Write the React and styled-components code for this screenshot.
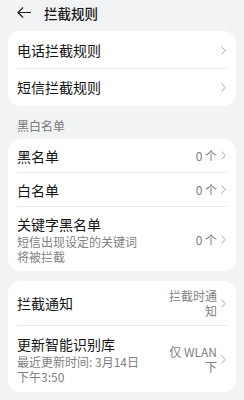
import React from 'react';
import styled, { createGlobalStyle } from 'styled-components';

const GlobalStyle = createGlobalStyle`
  html, body {
    margin: 0;
    padding: 0;
    background: #f1f3f5;
    font-family: "Noto Sans CJK SC", "Noto Sans", sans-serif;
    color: #191919;
  }
`;

const Page = styled.div`
  width: 244px;
  height: 400px;
  overflow: hidden;
  background: #f1f3f5;
`;

const Header = styled.div`
  display: flex;
  align-items: center;
  height: 25px;
  padding: 0 0 0 17px;
  gap: 13px;
  margin-bottom: 6px;
`;

const HeaderTitle = styled.div`
  font-size: 13.5px;
  font-weight: 500;
  line-height: 18px;
`;

const Card = styled.div`
  background: #fff;
  border-radius: 12px;
  margin: 0 8px;
  padding: ${(p) => p.$pad || '1px 0'};
`;

const Row = styled.div`
  display: flex;
  align-items: center;
  min-height: ${(p) => p.$h}px;
  padding: ${(p) => p.$vpad || 0}px 10px ${(p) => p.$vpad || 0}px 9px;
  box-sizing: border-box;
`;

const Texts = styled.div`
  flex: 1;
  display: flex;
  flex-direction: column;
`;

const Title = styled.div`
  font-size: 14px;
  font-weight: 400;
  line-height: 20px;
  color: #141414;
`;

const Sub = styled.div`
  font-size: 12px;
  line-height: 15.5px;
  color: #808080;
  max-width: 128px;
`;

const Value = styled.div`
  font-size: 12px;
  line-height: 15px;
  color: #808080;
  text-align: right;
  max-width: 52px;
  margin-right: 4px;
`;

const Divider = styled.div`
  height: 1px;
  background: #ebebeb;
  margin: 0 9px 0 9px;
`;

const SectionLabel = styled.div`
  font-size: 12px;
  color: #777;
  line-height: 16px;
  padding: 12px 17px 5px;
`;

const Gap = styled.div`
  height: ${(p) => p.$h}px;
`;

const Chevron = () => (
  <svg width="5" height="9" viewBox="0 0 5 9">
    <polyline points="0.6,0.6 4.2,4.5 0.6,8.4" fill="none" stroke="#a6a6a6" strokeWidth="1" />
  </svg>
);

const BackArrow = () => (
  <svg width="14" height="11" viewBox="0 0 14 11">
    <path d="M13.5 5.5H1M5.8 0.8L1 5.5l4.8 4.7" fill="none" stroke="#222" strokeWidth="1.2" strokeLinecap="round" strokeLinejoin="round" />
  </svg>
);

export default function App() {
  return (
    <Page>
      <GlobalStyle />
      <Header>
        <BackArrow />
        <HeaderTitle>拦截规则</HeaderTitle>
      </Header>

      <Card>
        <Row $h={36}>
          <Texts><Title>电话拦截规则</Title></Texts>
          <Chevron />
        </Row>
        <Divider />
        <Row $h={36}>
          <Texts><Title>短信拦截规则</Title></Texts>
          <Chevron />
        </Row>
      </Card>

      <SectionLabel>黑白名单</SectionLabel>

      <Card $pad="0">
        <Row $h={33}>
          <Texts><Title>黑名单</Title></Texts>
          <Value>0 个</Value>
          <Chevron />
        </Row>
        <Divider />
        <Row $h={33}>
          <Texts><Title>白名单</Title></Texts>
          <Value>0 个</Value>
          <Chevron />
        </Row>
        <Divider />
        <Row $h={64} $vpad={6}>
          <Texts>
            <Title>关键字黑名单</Title>
            <Sub>短信出现设定的关键词将被拦截</Sub>
          </Texts>
          <Value>0 个</Value>
          <Chevron />
        </Row>
      </Card>

      <Gap $h={10} />

      <Card $pad="0">
        <Row $h={44}>
          <Texts><Title>拦截通知</Title></Texts>
          <Value>拦截时通知</Value>
          <Chevron />
        </Row>
        <Divider />
        <Row $h={66} $vpad={6}>
          <Texts>
            <Title>更新智能识别库</Title>
            <Sub>最近更新时间: 3月14日下午3:50</Sub>
          </Texts>
          <Value>仅 WLAN下</Value>
          <Chevron />
        </Row>
      </Card>
    </Page>
  );
}
